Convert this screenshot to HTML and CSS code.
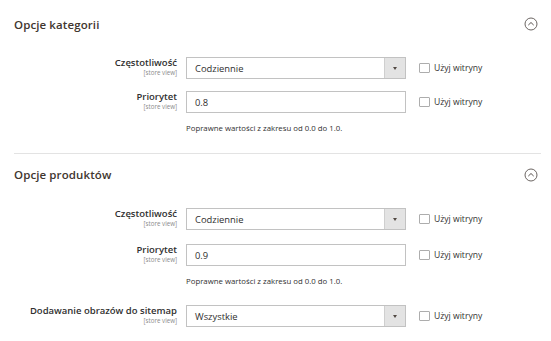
FILE: index.html
```html
<!DOCTYPE html>
<html lang="pl">
<head>
<meta charset="utf-8">
<link rel="stylesheet" href="styles.css">
</head>
<body>
<div class="page">
  <section class="section first">
    <div class="section-head">
      <h2 class="title">Opcje kategorii</h2>
      <svg class="toggle" width="14" height="14" viewBox="0 0 14 14"><circle cx="7" cy="7" r="6" fill="none" stroke="#5a5350" stroke-width="0.9"/><path d="M4.3 8.1 L7 5.5 L9.7 8.1" fill="none" stroke="#5a5350" stroke-width="1"/></svg>
    </div>
    <div class="row r1">
      <div class="label"><span class="name">Częstotliwość</span><span class="scope">[store view]</span></div>
      <div class="control select"><span class="value">Codziennie</span><span class="arrow"></span></div>
      <label class="use"><span class="box"></span>Użyj witryny</label>
    </div>
    <div class="row r2">
      <div class="label"><span class="name">Priorytet</span><span class="scope">[store view]</span></div>
      <div class="control input"><span class="value">0.8</span></div>
      <label class="use"><span class="box"></span>Użyj witryny</label>
    </div>
    <p class="note">Poprawne wartości z zakresu od 0.0 do 1.0.</p>
  </section>
  <section class="section second">
    <div class="section-head">
      <h2 class="title">Opcje produktów</h2>
      <svg class="toggle" width="14" height="14" viewBox="0 0 14 14"><circle cx="7" cy="7" r="6" fill="none" stroke="#5a5350" stroke-width="0.9"/><path d="M4.3 8.1 L7 5.5 L9.7 8.1" fill="none" stroke="#5a5350" stroke-width="1"/></svg>
    </div>
    <div class="row r3">
      <div class="label"><span class="name">Częstotliwość</span><span class="scope">[store view]</span></div>
      <div class="control select"><span class="value">Codziennie</span><span class="arrow"></span></div>
      <label class="use"><span class="box"></span>Użyj witryny</label>
    </div>
    <div class="row r4">
      <div class="label"><span class="name">Priorytet</span><span class="scope">[store view]</span></div>
      <div class="control input"><span class="value">0.9</span></div>
      <label class="use"><span class="box"></span>Użyj witryny</label>
    </div>
    <p class="note">Poprawne wartości z zakresu od 0.0 do 1.0.</p>
    <div class="row r5">
      <div class="label"><span class="name">Dodawanie obrazów do sitemap</span><span class="scope">[store view]</span></div>
      <div class="control select"><span class="value">Wszystkie</span><span class="arrow"></span></div>
      <label class="use"><span class="box"></span>Użyj witryny</label>
    </div>
  </section>
</div>
</body>
</html>
```

FILE: styles.css
```css
* { box-sizing: border-box; }
html, body { margin: 0; padding: 0; background: #fff; }
body { font-family: "Open Sans", "Noto Sans", sans-serif; color: #303030; }
.page { width: 551px; padding: 0 10px 0 14px; }

.section.first { border-bottom: 1px solid #e3e3e3; padding-bottom: 20px; }

.section-head {
  display: flex;
  align-items: center;
  justify-content: space-between;
  height: 48px;
}
.section.second .section-head { height: 41px; }
.title {
  margin: 0;
  font-size: 11.5px;
  font-weight: 600;
  color: #41362f;
  letter-spacing: 0.1px;
}
.toggle { display: block; margin-right: 3px; }

.row {
  display: grid;
  grid-template-columns: 163px 220px auto;
  column-gap: 9px;
  align-items: start;
}
.r1 { margin-top: 9px; }
.r2 { margin-top: 12px; }
.r3 { margin-top: 13px; }
.r4 { margin-top: 14px; }
.r5 { margin-top: 19px; }

.label {
  display: flex;
  flex-direction: column;
  align-items: flex-end;
  text-align: right;
}
.name { display: block; font-size: 9.5px; font-weight: 600; line-height: 12px; color: #303030; }
.scope { display: block; font-size: 6.2px; line-height: 7px; color: #8a8a8a; }

.control {
  height: 22px;
  border: 1px solid #c2c2c2;
  display: flex;
  align-items: center;
  font-size: 9.4px;
  color: #303030;
  background: #fff;
}
.control .value { flex: 1; padding-left: 8px; }
.select .arrow {
  width: 21px;
  align-self: stretch;
  background: #e3e3e3;
  border-left: 1px solid #cfcfcf;
  position: relative;
}
.select .arrow::after {
  content: "";
  position: absolute;
  left: 8px;
  top: 9px;
  border-left: 2.5px solid transparent;
  border-right: 2.5px solid transparent;
  border-top: 3px solid #514943;
}

.use {
  display: flex;
  align-items: center;
  gap: 4px;
  margin-left: 4px;
  height: 22px;
  font-size: 8.6px;
  color: #303030;
}
.box {
  width: 11px;
  height: 10px;
  border: 1px solid #adadad;
  border-radius: 1px;
  background: #fff;
}

.note {
  margin: 10px 0 0 172px;
  font-size: 7.8px;
  line-height: 10px;
  color: #303030;
}
```
